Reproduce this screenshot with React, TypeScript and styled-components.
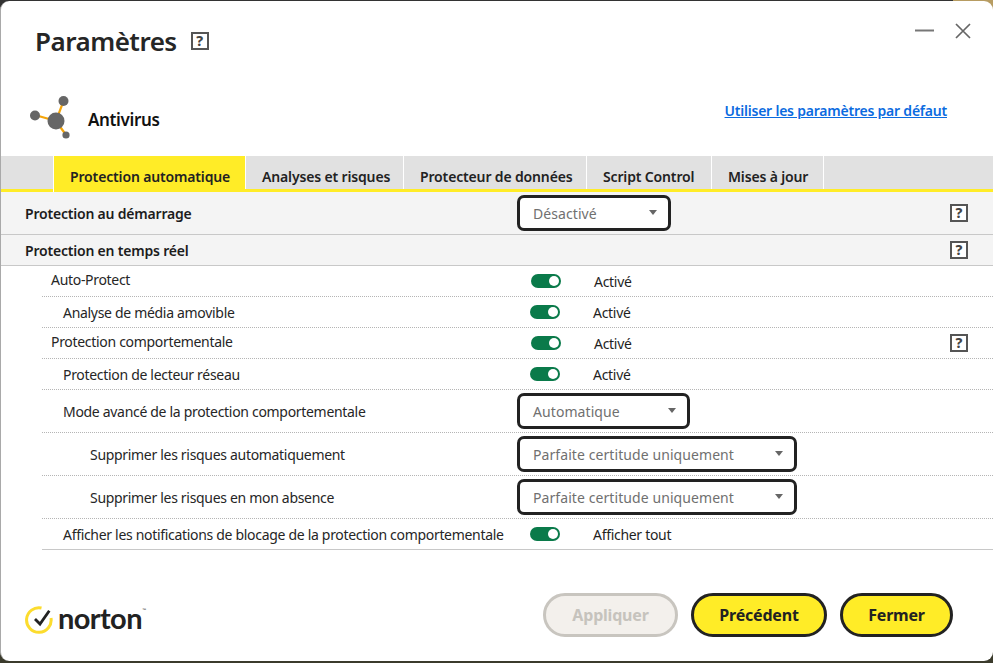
import React from 'react';
import styled, { createGlobalStyle } from 'styled-components';

const GlobalStyle = createGlobalStyle`
    html, body {
        margin: 0;
        padding: 0;
        height: 100%;
        overflow: hidden;
        background: linear-gradient(90deg, #333 96%, #b79c62 96%) top / 100% 12px no-repeat, #3b3b2c;
    }
    body {
        font-family: "Noto Sans", "Open Sans", sans-serif;
        font-size: 14px;
        letter-spacing: -0.2px;
        color: #1f1f1f;
    }
`;

const Win = styled.div`
    box-sizing: border-box;
    height: 660px;
    margin-top: 1px;
    background: #fff;
    border-left: 1px solid #a9a9a9;
    border-radius: 9px;
    display: flex;
    flex-direction: column;
`;

const TitleRow = styled.div`
    height: 80px;
    display: flex;
    align-items: flex-start;
    padding: 20px 22px 0 34px;
    box-sizing: border-box;
`;

const Title = styled.h1`
    margin: 0;
    font-size: 26px;
    line-height: 40px;
    font-weight: 600;
    letter-spacing: -0.5px;
    color: #262626;
`;

const HelpBox = styled.span<{ $top?: boolean }>`
    box-sizing: border-box;
    flex: none;
    width: 18px;
    height: 18px;
    border: 2px solid #555;
    display: flex;
    align-items: center;
    justify-content: center;
    font-size: 14px;
    line-height: 1;
    font-weight: 800;
    letter-spacing: 0;
    color: #444;
    background: #fff;
    margin-left: ${p => (p.$top ? '14px' : 'auto')};
    margin-top: ${p => (p.$top ? '11px' : '0')};
`;

const WinButtons = styled.div`
    margin-left: auto;
    display: flex;
    gap: 20px;
    padding-top: 2px;
    svg {
        display: block;
    }
`;

const ProductRow = styled.div`
    height: 75px;
    display: flex;
    align-items: flex-start;
    padding: 15px 46px 0 27px;
    box-sizing: border-box;
`;

const ProductName = styled.div`
    margin: 13px 0 0 16px;
    font-size: 17px;
    line-height: 22px;
    font-weight: 600;
    letter-spacing: -0.35px;
    color: #111;
`;

const DefaultsLink = styled.a`
    margin: 4px 0 0 auto;
    font-size: 14px;
    line-height: 22px;
    font-weight: 600;
    color: #0b6be0;
    text-decoration: underline;
    letter-spacing: -0.22px;
`;

const TabBar = styled.div`
    height: 36px;
    box-sizing: border-box;
    display: flex;
    background: #e1e1e1;
    border-bottom: 3px solid #ffec27;
    padding-left: 52px;
`;

const Tab = styled.div<{ $w: number; $active?: boolean }>`
    box-sizing: border-box;
    width: ${p => p.$w}px;
    height: ${p => (p.$active ? 36 : 33)}px;
    padding: 10px 0 0 16px;
    line-height: 22px;
    font-weight: 600;
    letter-spacing: -0.15px;
    color: #222;
    white-space: nowrap;
    border-left: 1px solid #fff;
    background: ${p => (p.$active ? '#ffec27' : 'transparent')};
`;

const Section = styled.div<{ $h: number }>`
    box-sizing: border-box;
    height: ${p => p.$h}px;
    display: flex;
    align-items: center;
    padding: 0 25px 0 24px;
    background: #f4f4f4;
    border-bottom: 1px solid #c8c8c8;
`;

const SectionLabel = styled.div`
    width: 492px;
    flex: none;
    font-weight: 600;
    color: #1c1c1c;
`;

const Rows = styled.div`
    margin-left: 41px;
    border-bottom: 1px solid #c8c8c8;
`;

const Row = styled.div<{ $h: number }>`
    box-sizing: border-box;
    height: ${p => p.$h}px;
    display: flex;
    align-items: center;
    padding-right: 25px;
    border-bottom: 1px dotted #b5b5b5;
    &:last-child {
        border-bottom: none;
        height: 30px;
    }
`;

const Label = styled.div<{ $level: number; $raised?: boolean }>`
    width: 475px;
    flex: none;
    box-sizing: border-box;
    padding-left: ${p => [9, 21, 48][p.$level]}px;
    color: #262626;
    letter-spacing: -0.31px;
    white-space: nowrap;
    position: relative;
    top: ${p => (p.$raised ? -2 : 0)}px;
`;

const Toggle = styled.span<{ $raised?: boolean }>`
    width: 30px;
    height: 14px;
    flex: none;
    margin-left: ${p => (p.$raised ? 14 : 13)}px;
    border-radius: 7px;
    background: #0a7a4a;
    display: flex;
    justify-content: flex-end;
    align-items: center;
    padding-right: 2px;
    box-sizing: border-box;
    &::after {
        content: '';
        width: 10px;
        height: 10px;
        border-radius: 50%;
        background: #fff;
    }
`;

const Status = styled.span`
    margin-left: 33px;
    color: #1f1f1f;
    letter-spacing: -0.3px;
`;

const Select = styled.div<{ $w: number }>`
    box-sizing: border-box;
    width: ${p => p.$w}px;
    height: 36px;
    border: 3px solid #222;
    border-radius: 7px;
    display: flex;
    align-items: center;
    justify-content: space-between;
    padding: 0 11px 0 13px;
    color: #707070;
    letter-spacing: 0.08px;
    background: #fff;
    flex: none;
    &::after {
        content: '';
        border-left: 4.5px solid transparent;
        border-right: 4.5px solid transparent;
        border-top: 5px solid #666;
        margin-bottom: 2px;
    }
`;

const Footer = styled.div`
    flex: 1;
    display: flex;
    align-items: flex-start;
    padding: 43px 40px 0 24px;
`;

const Brand = styled.div`
    display: flex;
    align-items: flex-start;
    margin-top: 13px;
    color: #222;
`;

const BrandName = styled.span`
    font-family: "Lato", "Noto Sans", sans-serif;
    font-size: 29px;
    line-height: 24px;
    font-weight: 700;
    letter-spacing: -0.6px;
    margin-left: 5px;
`;

const BrandTm = styled.sup`
    font-family: "Liberation Sans", sans-serif;
    font-size: 4px;
    line-height: 8px;
    font-weight: 400;
    letter-spacing: 0;
    vertical-align: top;
`;

const Actions = styled.div`
    margin-left: auto;
    display: flex;
    gap: 13px;
`;

const Button = styled.button<{ $w: number }>`
    box-sizing: border-box;
    width: ${p => p.$w}px;
    height: 44px;
    border: 3px solid #222;
    border-radius: 22px;
    background: #ffec27;
    color: #222;
    font-family: inherit;
    font-size: 16px;
    font-weight: 700;
    letter-spacing: -0.2px;
    padding: 0;
    &:disabled {
        background: #f3f0ec;
        border-color: #c8c5bf;
        color: #c6c3bd;
    }
`;

const AntivirusIcon = () => (
    <svg width="44" height="44" viewBox="0 0 44 44">
        <g stroke="#f5a50a" strokeWidth="2.2">
            <line x1="28" y1="25" x2="35.5" y2="5" />
            <line x1="28" y1="25" x2="7" y2="19" />
            <line x1="28" y1="25" x2="38" y2="39" />
        </g>
        <g fill="#666">
            <circle cx="28" cy="25" r="8.5" />
            <circle cx="35.5" cy="5" r="5" />
            <circle cx="7" cy="19.5" r="5" />
            <circle cx="38" cy="39" r="3.6" />
        </g>
    </svg>
);

const NortonMark = () => (
    <svg width="28" height="29" viewBox="0 0 28 29">
        <path d="M16.5 2A12.3 12.3 0 1 0 26 12" fill="none" stroke="#fcdc2e" strokeWidth="3" />
        <path d="M10 13l5 5 9.3-13.3" fill="none" stroke="#222" strokeWidth="2.8" />
    </svg>
);

const settings = [
    { label: 'Auto-Protect', level: 0, status: 'Activé', raised: true },
    { label: 'Analyse de média amovible', level: 1, status: 'Activé' },
    { label: 'Protection comportementale', level: 0, status: 'Activé', raised: true, help: true },
    { label: 'Protection de lecteur réseau', level: 1, status: 'Activé' },
    { label: 'Mode avancé de la protection comportementale', level: 1, select: 'Automatique', width: 173 },
    { label: 'Supprimer les risques automatiquement', level: 2, select: 'Parfaite certitude uniquement', width: 280 },
    { label: 'Supprimer les risques en mon absence', level: 2, select: 'Parfaite certitude uniquement', width: 280 },
    { label: 'Afficher les notifications de blocage de la protection comportementale', level: 1, status: 'Afficher tout' },
];

const tabs = [
    { name: 'Protection automatique', w: 192, active: true },
    { name: 'Analyses et risques', w: 158 },
    { name: 'Protecteur de données', w: 183 },
    { name: 'Script Control', w: 125 },
    { name: 'Mises à jour', w: 112 },
];

const App = () => (
    <>
        <GlobalStyle />
        <Win>
            <TitleRow>
                <Title>Paramètres</Title>
                <HelpBox $top>?</HelpBox>
                <WinButtons>
                    <svg width="20" height="16" viewBox="0 0 20 16">
                        <line x1="0" y1="7.5" x2="19" y2="7.5" stroke="#777" strokeWidth="2" />
                    </svg>
                    <svg width="16" height="16" viewBox="0 0 16 16">
                        <path d="M1 1l14 14M15 1L1 15" stroke="#666" strokeWidth="1.7" fill="none" />
                    </svg>
                </WinButtons>
            </TitleRow>
            <ProductRow>
                <AntivirusIcon />
                <ProductName>Antivirus</ProductName>
                <DefaultsLink>Utiliser les paramètres par défaut</DefaultsLink>
            </ProductRow>
            <TabBar>
                {tabs.map(t => (
                    <Tab key={t.name} $w={t.w} $active={t.active}>{t.name}</Tab>
                ))}
                <Tab $w={1} />
            </TabBar>
            <Section $h={43}>
                <SectionLabel>Protection au démarrage</SectionLabel>
                <Select $w={154}>Désactivé</Select>
                <HelpBox>?</HelpBox>
            </Section>
            <Section $h={31}>
                <SectionLabel>Protection en temps réel</SectionLabel>
                <HelpBox>?</HelpBox>
            </Section>
            <Rows>
                {settings.map(s => (
                    <Row key={s.label} $h={s.select ? 43 : 31}>
                        <Label $level={s.level} $raised={s.raised}>{s.label}</Label>
                        {s.select ? (
                            <Select $w={s.width ?? 154}>{s.select}</Select>
                        ) : (
                            <>
                                <Toggle $raised={s.raised} />
                                <Status>{s.status}</Status>
                            </>
                        )}
                        {s.help && <HelpBox>?</HelpBox>}
                    </Row>
                ))}
            </Rows>
            <Footer>
                <Brand>
                    <NortonMark />
                    <BrandName>norton<BrandTm>™</BrandTm></BrandName>
                </Brand>
                <Actions>
                    <Button $w={135} disabled>Appliquer</Button>
                    <Button $w={136}>Précédent</Button>
                    <Button $w={113}>Fermer</Button>
                </Actions>
            </Footer>
        </Win>
    </>
);

export default App;
